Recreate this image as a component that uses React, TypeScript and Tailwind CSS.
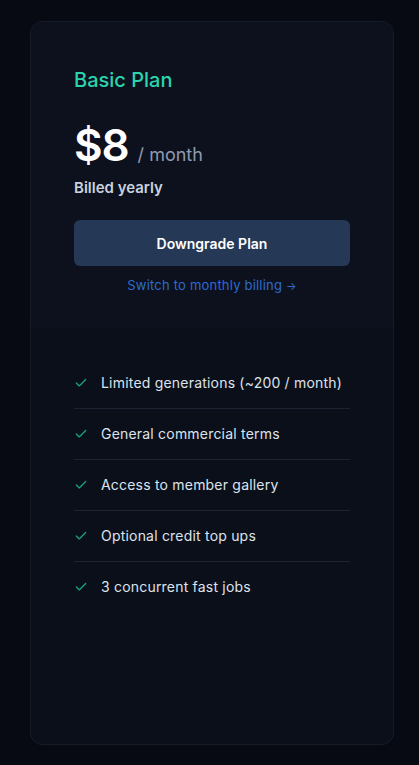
import { Check } from 'lucide-react';

const features = [
  'Limited generations (~200 / month)',
  'General commercial terms',
  'Access to member gallery',
  'Optional credit top ups',
  '3 concurrent fast jobs',
];

export default function App() {
  return (
    <div
      className="min-h-[765px] bg-[#080a13] pl-[30px] pr-[25px] pt-[21px] pb-[20px]"
      style={{ fontFamily: '"Inter", "Noto Sans", sans-serif' }}
    >
      <div className="flex h-[724px] flex-col overflow-hidden rounded-xl border border-[#161b28] bg-[#0b0f1a]">
        {/* Header */}
        <div className="bg-[#0d111d] pl-[43px] pr-[43px] pt-[44px] pb-[32px]">
          <h2 className="text-[20px] leading-[28px] font-medium text-[#2bd4ad]">Basic Plan</h2>
          <div className="mt-[25px] flex items-baseline gap-[9px]">
            <span className="text-[44px] leading-[52px] font-semibold tracking-tight text-white">$8</span>
            <span className="text-[18px] text-[#8f9bb0]">/ month</span>
          </div>
          <p className="mt-[6px] text-[15px] leading-[22px] font-semibold text-[#c9d1de]">Billed yearly</p>
          <button className="mt-[21px] h-[46px] w-full rounded-md bg-[#253855] text-[14px] font-semibold text-white">
            Downgrade Plan
          </button>
          <div className="mt-[10px] text-center text-[13px] leading-[18px] tracking-[0.2px] text-[#2d6bd0]">
            Switch to monthly billing <span className="text-[11px]">→</span>
          </div>
        </div>

        {/* Features */}
        <ul className="pl-[43px] pr-[43px] pt-[31px]">
          {features.map((f, i) => (
            <li
              key={f}
              className={`flex items-center gap-[13px] py-[15px] ${i < features.length - 1 ? 'border-b border-[#1c2332]' : ''}`}
            >
              <Check className="h-[14px] w-[14px] text-[#16a37c]" strokeWidth={2.25} />
              <span className="text-[14px] leading-[20px] tracking-[0.2px] text-[#dde3ec]">{f}</span>
            </li>
          ))}
        </ul>
      </div>
    </div>
  );
}
